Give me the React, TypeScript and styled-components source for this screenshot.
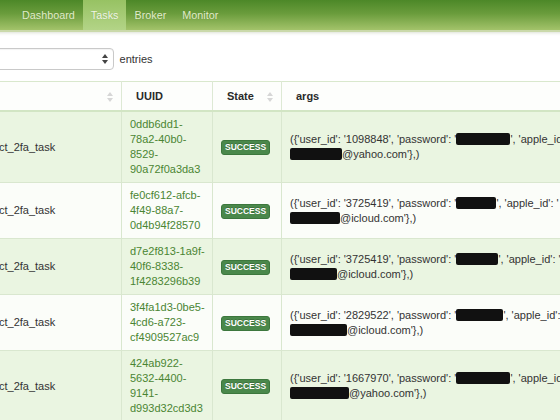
import { styled, createGlobalStyle } from "styled-components";
import { Fragment } from "react";

const GlobalStyle = createGlobalStyle`
  html, body {
    margin: 0;
    padding: 0;
    background: #ffffff;
    overflow: hidden;
  }
  body {
    font-family: "Liberation Sans", Arial, Helvetica, sans-serif;
    color: #333333;
  }
`;

const Viewport = styled.div`
  width: 560px;
  height: 420px;
  overflow: hidden;
`;

const Page = styled.div`
  margin-left: -40px;
  width: 800px;
`;

const Navbar = styled.nav`
  display: flex;
  height: 30px;
  padding-left: 54px;
  background: linear-gradient(#4c8828 0%, #6a9c3c 45%, #a3c36a 100%);
  border-bottom: 2px solid #cad9aa;
  box-shadow: 0 1px 3px rgba(120, 140, 90, 0.25);
`;

const NavItem = styled.a<{ $active?: boolean }>`
  display: block;
  padding: 0 8px;
  line-height: 30px;
  font-size: 10.8px;
  color: ${(p) => (p.$active ? "#f1f7e6" : "#e0ecca")};
  text-decoration: none;
  text-shadow: 0 0 1px rgba(60, 90, 30, 0.3);
  background: ${(p) =>
    p.$active ? "linear-gradient(#97c263, #b3d487)" : "transparent"};
`;

const Toolbar = styled.div`
  display: flex;
  align-items: center;
  margin-top: 16px;
  margin-left: -32px;
  height: 22px;
  font-size: 11px;
`;

const Label = styled.span`
  margin-right: 6px;
`;

const SelectBox = styled.div`
  box-sizing: border-box;
  display: flex;
  align-items: center;
  justify-content: space-between;
  width: 152px;
  height: 22px;
  padding: 0 5px 0 8px;
  border: 1px solid #c9c9c9;
  border-radius: 4px;
  background: #ffffff;
  box-shadow: inset 0 1px 1px rgba(0, 0, 0, 0.05);
`;

const Entries = styled.span`
  margin-left: 6px;
`;

const Table = styled.table`
  margin-top: 11px;
  border-collapse: collapse;
  table-layout: fixed;
  width: 650px;
  font-size: 11px;
  line-height: 15px;
`;

const Th = styled.th`
  padding: 7px 8px 6px 14px;
  text-align: left;
  font-weight: bold;
  color: #2a2a2a;
  background: #fdfefc;
  border-top: 1px solid #d9e8cd;
  border-bottom: 2px solid #d2e5c4;
  border-left: 1px solid #dde9d4;
  border-right: 1px solid #dde9d4;

  &:first-child {
    padding-left: 8px;
  }
`;

const HeadInner = styled.div`
  display: flex;
  align-items: center;
  justify-content: space-between;
`;

const Row = styled.tr<{ $green: boolean }>`
  background: ${(p) => (p.$green ? "#eaf5e1" : "#fbfdf9")};
`;

const Td = styled.td`
  padding: 5px 6px 5px 8px;
  vertical-align: middle;
  border: 1px solid #d9e7cf;
  word-wrap: break-word;
`;

const UuidLink = styled.a`
  color: #4a8533;
  text-decoration: none;
`;

const Badge = styled.span`
  display: inline-block;
  padding: 1px 3px;
  font-size: 8.5px;
  line-height: 11px;
  font-weight: bold;
  color: #ffffff;
  text-transform: uppercase;
  background: #4a884b;
  border: 1px solid #3c773d;
  border-radius: 3px;
  text-shadow: 0 -1px 0 rgba(0, 0, 0, 0.2);
`;

const Redacted = styled.span<{ $w: number }>`
  display: inline-block;
  width: ${(p) => p.$w}px;
  height: 12px;
  vertical-align: -2px;
  background: #111111;
  border-radius: 2px;
`;

const SortIcon = () => (
  <svg width="6" height="10" viewBox="0 0 6 10">
    <path d="M3 0 L6 4 L0 4 Z" fill="#d6d6d6" />
    <path d="M3 10 L6 6 L0 6 Z" fill="#d6d6d6" />
  </svg>
);

const SelectArrows = () => (
  <svg width="6" height="10" viewBox="0 0 6 10">
    <path d="M3 0 L6 4 L0 4 Z" fill="#444" />
    <path d="M3 10 L6 6 L0 6 Z" fill="#444" />
  </svg>
);

type Task = {
  uuid: string;
  userId: string;
  pw: number;
  email: number;
  domain: string;
};

const tasks: Task[] = [
  { uuid: "0ddb6dd1-78a2-40b0-8529-90a72f0a3da3", userId: "1098848", pw: 54, email: 52, domain: "yahoo.com" },
  { uuid: "fe0cf612-afcb-4f49-88a7-0d4b94f28570", userId: "3725419", pw: 40, email: 50, domain: "icloud.com" },
  { uuid: "d7e2f813-1a9f-40f6-8338-1f4283296b39", userId: "3725419", pw: 42, email: 47, domain: "icloud.com" },
  { uuid: "3f4fa1d3-0be5-4cd6-a723-cf4909527ac9", userId: "2829522", pw: 47, email: 57, domain: "icloud.com" },
  { uuid: "424ab922-5632-4400-9141-d993d32cd3d3", userId: "1667970", pw: 54, email: 59, domain: "yahoo.com" },
];

// break only after the hyphens, like the original wraps
const Uuid = ({ value }: { value: string }) => {
  const parts = value.split("-");
  return (
    <UuidLink href="#">
      {parts.map((part, i) => (
        <Fragment key={i}>
          {part}
          {i < parts.length - 1 && (
            <>
              -<wbr />
            </>
          )}
        </Fragment>
      ))}
    </UuidLink>
  );
};

export default function App() {
  return (
    <Viewport>
      <GlobalStyle />
      <Page>
        <Navbar>
          <NavItem href="#">Dashboard</NavItem>
          <NavItem href="#" $active>
            Tasks
          </NavItem>
          <NavItem href="#">Broker</NavItem>
          <NavItem href="#">Monitor</NavItem>
        </Navbar>

        <Toolbar>
          <Label>Show</Label>
          <SelectBox>
            <span>10</span>
            <SelectArrows />
          </SelectBox>
          <Entries>entries</Entries>
        </Toolbar>

        <Table>
          <colgroup>
            <col style={{ width: 161 }} />
            <col style={{ width: 91 }} />
            <col style={{ width: 69 }} />
            <col style={{ width: 329 }} />
          </colgroup>
          <thead>
            <tr>
              <Th>
                <HeadInner>
                  <span>Name</span>
                  <SortIcon />
                </HeadInner>
              </Th>
              <Th>UUID</Th>
              <Th>
                <HeadInner>
                  <span>State</span>
                  <SortIcon />
                </HeadInner>
              </Th>
              <Th>args</Th>
            </tr>
          </thead>
          <tbody>
            {tasks.map((t, i) => (
              <Row key={t.uuid} $green={i % 2 === 0}>
                <Td>connect_2fa_task</Td>
                <Td>
                  <Uuid value={t.uuid} />
                </Td>
                <Td>
                  <Badge>Success</Badge>
                </Td>
                <Td>
                  ({"{"}'user_id': '{t.userId}', 'password': '
                  <Redacted $w={t.pw} />', 'apple_id': '
                  <Redacted $w={t.email} />@{t.domain}'{"}"},)
                </Td>
              </Row>
            ))}
          </tbody>
        </Table>
      </Page>
    </Viewport>
  );
}
